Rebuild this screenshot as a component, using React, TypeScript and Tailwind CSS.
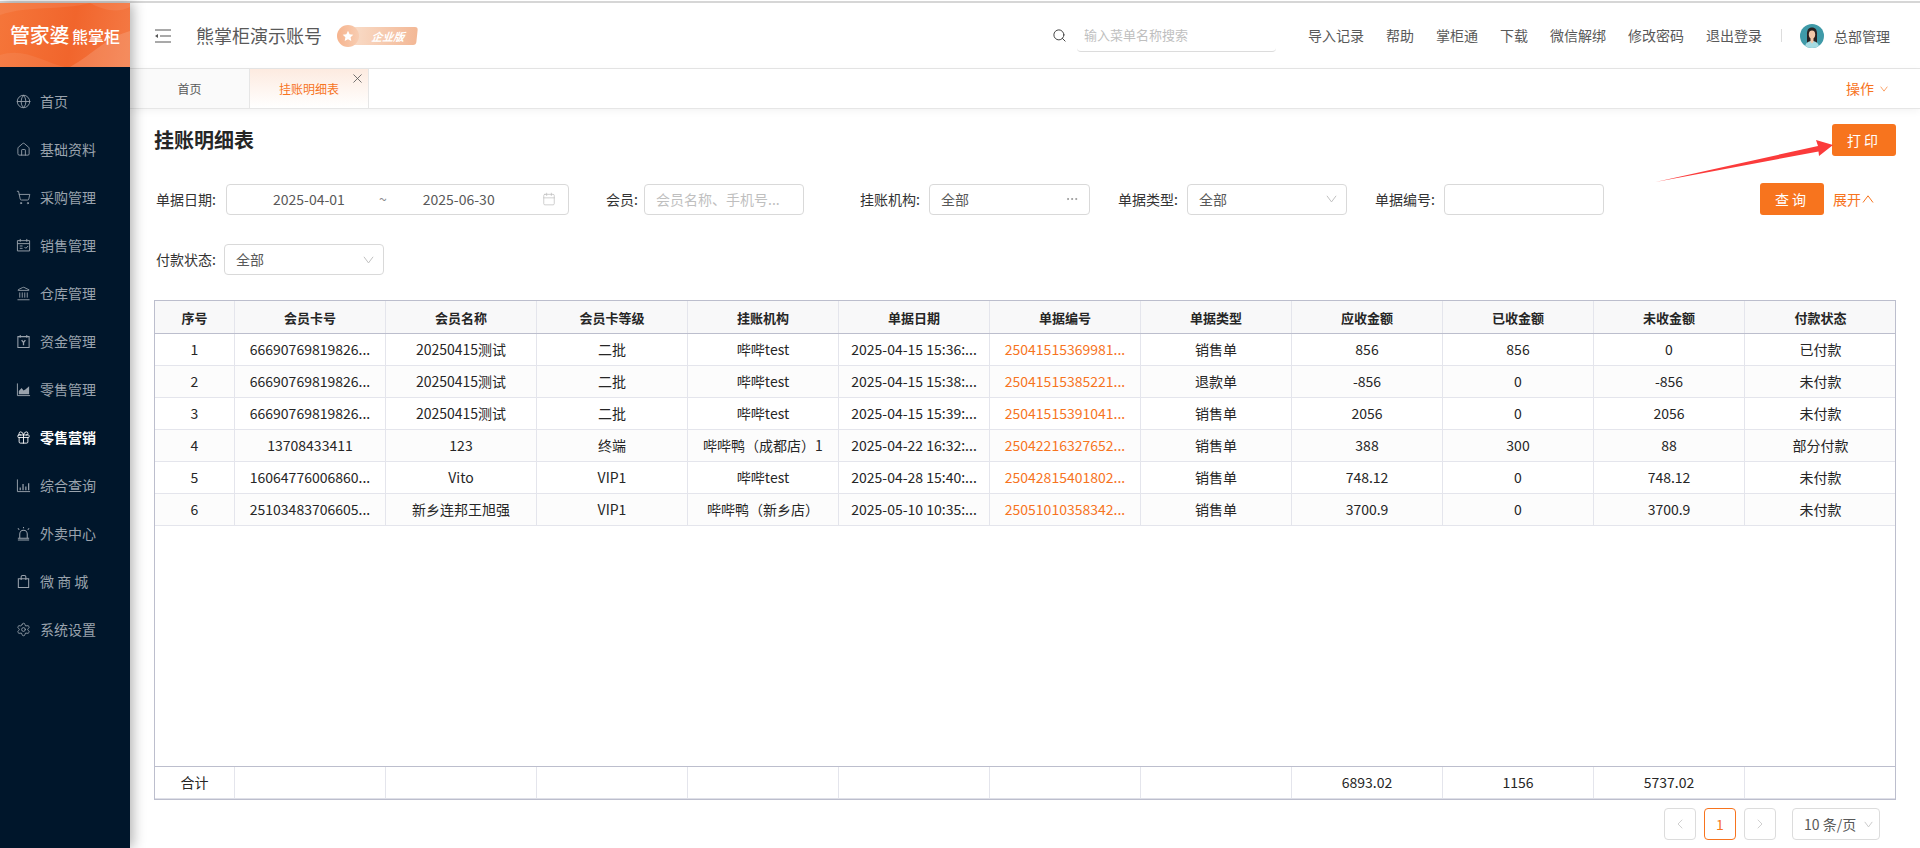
import { Globe, House, ShoppingCart, Landmark, Gift, Settings, Search, X, ChevronLeft, ChevronRight, Calendar, Ellipsis } from 'lucide-react';

const FONT = 'font-["Noto_Sans_CJK_SC","Noto_Sans",sans-serif]';

type IconProps = { className?: string; strokeWidth?: number };

function YenBox({ className }: IconProps) {
  return (
    <svg viewBox="0 0 16 16" fill="none" stroke="currentColor" strokeWidth="1.1" className={className}>
      <path d="M4.500 1v3M11.500 1v3M2 2.800h12v11.700H2z" />
      <path d="M6 6.500l2 2.500 2-2.500M8 9v3" strokeWidth="1.400" />
    </svg>
  );
}

function SalesCal({ className }: IconProps) {
  return (
    <svg viewBox="0 0 16 16" fill="none" stroke="currentColor" strokeWidth="1" className={className}>
      <path d="M4.500 1v3M11.500 1v3M1.500 2.800h13v11h-13z" />
      <path d="M1.500 6h13M4 8.500h3M4 11h3M9 9.500l1.500 1.500 2.500-2.500" />
    </svg>
  );
}

function AreaIcon({ className }: IconProps) {
  return (
    <svg viewBox="0 0 16 16" fill="none" stroke="currentColor" strokeWidth="1" className={className}>
      <path d="M1.500 1.500V14.500H15" />
      <path d="M3 13V9.500L6 6.500 8 9 10 8 14 4.500V13z" fill="currentColor" stroke="none" />
    </svg>
  );
}

function BarsIcon({ className }: IconProps) {
  return (
    <svg viewBox="0 0 16 16" fill="none" stroke="currentColor" strokeWidth="1" className={className}>
      <path d="M1.500 1.500V14.500H15" />
      <path d="M4.500 13V10M7.500 13V6.500M10.500 13V9M13.500 13V5.500" strokeWidth="1.300" />
    </svg>
  );
}

function AlarmIcon({ className }: IconProps) {
  return (
    <svg viewBox="0 0 16 16" fill="none" stroke="currentColor" strokeWidth="1.100" className={className}>
      <path d="M4 13V8.500a4 4 0 0 1 8 0V13M2 15h12" />
      <path d="M2 2.500l1.500 1.500M14 2.500L12.500 4M8 1v1.500M2 13h12" />
    </svg>
  );
}

function BagIcon({ className }: IconProps) {
  return (
    <svg viewBox="0 0 16 16" fill="none" stroke="currentColor" strokeWidth="1.100" className={className}>
      <path d="M2.500 5h11v9.500h-11zM5.500 6.500V3a1.500 1.500 0 0 1 1.500-1.500h2A1.500 1.500 0 0 1 10.500 3v3.500" />
    </svg>
  );
}

function Caret({ up, className }: { up?: boolean; className?: string }) {
  return (
    <svg viewBox="0 0 12 8" fill="none" stroke="currentColor" strokeWidth="1" className={className}>
      <path d={up ? 'M1 7.500L6 .8l5 6.700' : 'M1 .5l5 6.700L11 .5'} />
    </svg>
  );
}

const menu = [
  { icon: Globe, label: '首页' },
  { icon: House, label: '基础资料' },
  { icon: ShoppingCart, label: '采购管理' },
  { icon: SalesCal, label: '销售管理' },
  { icon: Landmark, label: '仓库管理' },
  { icon: YenBox, label: '资金管理' },
  { icon: AreaIcon, label: '零售管理' },
  { icon: Gift, label: '零售营销', active: true },
  { icon: BarsIcon, label: '综合查询' },
  { icon: AlarmIcon, label: '外卖中心' },
  { icon: BagIcon, label: '微 商 城' },
  { icon: Settings, label: '系统设置' },
];

const navLinks = ['导入记录', '帮助', '掌柜通', '下载', '微信解绑', '修改密码', '退出登录'];

const columns = ['序号', '会员卡号', '会员名称', '会员卡等级', '挂账机构', '单据日期', '单据编号', '单据类型', '应收金额', '已收金额', '未收金额', '付款状态'];

const rows = [
  ['1', '66690769819826...', '20250415测试', '二批', '哔哔test', '2025-04-15 15:36:...', '25041515369981...', '销售单', '856', '856', '0', '已付款'],
  ['2', '66690769819826...', '20250415测试', '二批', '哔哔test', '2025-04-15 15:38:...', '25041515385221...', '退款单', '-856', '0', '-856', '未付款'],
  ['3', '66690769819826...', '20250415测试', '二批', '哔哔test', '2025-04-15 15:39:...', '25041515391041...', '销售单', '2056', '0', '2056', '未付款'],
  ['4', '13708433411', '123', '终端', '哔哔鸭（成都店）1', '2025-04-22 16:32:...', '25042216327652...', '销售单', '388', '300', '88', '部分付款'],
  ['5', '16064776006860...', 'Vito', 'VIP1', '哔哔test', '2025-04-28 15:40:...', '25042815401802...', '销售单', '748.12', '0', '748.12', '未付款'],
  ['6', '25103483706605...', '新乡连邦王旭强', 'VIP1', '哔哔鸭（新乡店）', '2025-05-10 10:35:...', '25051010358342...', '销售单', '3700.9', '0', '3700.9', '未付款'],
];

const totals = ['合计', '', '', '', '', '', '', '', '6893.02', '1156', '5737.02', ''];

const gridCols = 'grid grid-cols-[80px_repeat(11,151px)]';

function Logo() {
  return (
    <div className="relative h-[64px] overflow-hidden bg-[linear-gradient(100deg,#f5763a,#f1652c_55%,#f47a45)] flex items-center pl-[10px]">
      <svg viewBox="0 0 130 64" className="absolute inset-0 w-full h-full">
        <path d="M0 12C30 2 60 8 90 0H0z" fill="#ffffff" fillOpacity="0.08" />
        <path d="M70 64C95 50 105 35 130 28V64z" fill="#ffffff" fillOpacity="0.14" />
        <path d="M90 0C105 8 118 10 130 4V0z" fill="#ffffff" fillOpacity="0.08" />
        <path d="M0 52C25 44 45 60 65 64H0z" fill="#ffffff" fillOpacity="0.07" />
      </svg>
      <span className="relative text-white font-medium text-[20px] leading-none tracking-[-0.3px]">管家婆</span>
      <span className="relative text-white font-medium text-[16px] leading-none ml-[3px] mt-[2px]">熊掌柜</span>
    </div>
  );
}

function Sidebar() {
  return (
    <aside className="relative z-10 w-[130px] shrink-0 bg-[#00162b] shadow-[3px_0_12px_rgba(0,0,0,0.3)]">
      <Logo />
      <nav className="pt-[10px]">
        {menu.map((item) => (
          <div key={item.label} className={`h-[48px] flex items-center pl-[16px] text-[14px] ${item.active ? 'text-white font-bold' : 'text-[#9aa3ad]'}`}>
            <item.icon className="w-[15px] h-[15px] mr-[9px]" strokeWidth={1.4} />
            <span>{item.label}</span>
          </div>
        ))}
      </nav>
    </aside>
  );
}

function Avatar() {
  return (
    <svg viewBox="0 0 24 24" className="w-[24px] h-[24px] rounded-full">
      <rect width="24" height="24" fill="#3f9aa8" />
      <path d="M7 20V9.500C7 5 9.500 3.500 12 3.500S17 5 17 9.500V20z" fill="#2a2120" />
      <ellipse cx="12" cy="10.500" rx="3.200" ry="4" fill="#f2c7a8" />
      <path d="M5 24c0-5 3-7 7-7s7 2 7 7z" fill="#a6dbe2" />
      <path d="M10.500 14h3v4l-1.500 1.500L10.500 18z" fill="#f2c7a8" />
    </svg>
  );
}

function Header() {
  return (
    <header className="h-[66px] shrink-0 flex items-center border-b border-[#e6e6e6] bg-white">
      <svg viewBox="0 0 16 14" className="w-[16px] h-[14px] ml-[25px]" fill="none" stroke="#555555" strokeWidth="1.200">
        <path d="M0 1h16M5 7h11M0 13h16" />
        <path d="M0 7l3-2v4z" fill="#555555" stroke="none" />
      </svg>
      <span className="ml-[25px] text-[18px] text-[#595959]">熊掌柜演示账号</span>
      <div className="relative ml-[15px] w-[80px] h-[22px]">
        <div className="absolute left-[14px] top-[2px] w-[66px] h-[18px] rounded-[3px] -skew-x-6 bg-[linear-gradient(90deg,#f9dcc8,#f3b896)] flex items-center justify-center pl-[8px]">
          <span className="text-white text-[11px] font-bold italic leading-none">企业版</span>
        </div>
        <div className="absolute left-0 top-0 w-[22px] h-[22px] rounded-full bg-[linear-gradient(90deg,#f6b48e,#f8cdb2)] flex items-center justify-center">
          <svg viewBox="0 0 12 12" className="w-[12px] h-[12px]">
            <path d="M6 .8l1.600 3.400 3.700.5-2.700 2.600.7 3.700L6 9.200 2.700 11l.7-3.700L.7 4.700l3.700-.5z" fill="#ffffff" />
          </svg>
        </div>
      </div>
      <Search className="ml-auto w-[15px] h-[15px] text-[#444444]" strokeWidth={1.6} />
      <div className="ml-[10px] w-[199px] h-[32px] flex items-center pl-[7px] text-[13px] text-[#bfbfbf] border-b border-[#dcdcdc] rounded-b-[4px]">输入菜单名称搜索</div>
      <div className="ml-[32px] flex items-center gap-[22px] text-[14px] text-[#595959]">
        {navLinks.map((t) => (
          <span key={t}>{t}</span>
        ))}
      </div>
      <div className="ml-[19px] w-px h-[13px] bg-[#dddddd]" />
      <div className="ml-[18px]">
        <Avatar />
      </div>
      <span className="ml-[10px] mr-[30px] mt-[2px] text-[14px] text-[#595959]">总部管理</span>
    </header>
  );
}

function Tabs() {
  return (
    <div className="relative h-[40px] shrink-0 flex border-b border-[#e6e6e6] bg-white shadow-[0_2px_8px_rgba(0,0,0,0.05)]">
      <div className="w-[120px] flex items-center justify-center bg-[#fafafa] border-r border-[#e6e6e6] text-[12px] text-[#595959]">首页</div>
      <div className="relative w-[119px] flex items-center justify-center bg-[linear-gradient(180deg,#fdebe0,#ffffff)] border-r border-[#e6e6e6] text-[12px] text-[#f7741e]">
        挂账明细表
        <X className="absolute right-[3px] top-[2px] w-[15px] h-[15px] text-[#555555]" strokeWidth={1.3} />
      </div>
      <div className="ml-auto mr-[32px] flex items-center text-[14px] text-[#f7741e]">
        操作
        <Caret className="ml-[6px] w-[8px] h-[6px]" />
      </div>
    </div>
  );
}

function Field({ className, children }: { className: string; children?: React.ReactNode }) {
  return <div className={`h-[31px] shrink-0 flex items-center border border-[#d9d9d9] rounded-[4px] text-[14px] text-[#595959] ${className}`}>{children}</div>;
}

function Label({ className, children }: { className: string; children: React.ReactNode }) {
  return <span className={`shrink-0 whitespace-nowrap text-right text-[14px] text-[#333333] ${className}`}>{children}</span>;
}

function SelectBox({ className }: { className: string }) {
  return (
    <Field className={`pl-[11px] pr-[9px] justify-between ${className}`}>
      全部
      <Caret className="w-[11px] h-[8px] text-[#bbbbbb]" />
    </Field>
  );
}

function Filters() {
  return (
    <>
      <div className="mt-[27px] h-[32px] flex items-center pr-[24px]">
        <Label className="w-[72px] pr-[10px]">单据日期:</Label>
        <Field className="w-[343px] pl-[46px] pr-[12px]">
          <span className="w-[72px]">2025-04-01</span>
          <span className="ml-[34px] text-[#8c8c8c]">~</span>
          <span className="ml-[36px] w-[72px]">2025-06-30</span>
          <Calendar className="ml-auto w-[14px] h-[14px] text-[#bbbbbb]" strokeWidth={1.2} />
        </Field>
        <Label className="w-[75px] pr-[6px]">会员:</Label>
        <Field className="w-[160px] pl-[11px] text-[#bfbfbf]">会员名称、手机号...</Field>
        <Label className="w-[125px] pr-[9px]">挂账机构:</Label>
        <Field className="w-[161px] pl-[11px] pr-[10px] justify-between">
          全部
          <Ellipsis className="w-[14px] h-[14px] text-[#8c8c8c]" strokeWidth={1.4} />
        </Field>
        <Label className="w-[97px] pr-[9px]">单据类型:</Label>
        <SelectBox className="w-[160px]" />
        <Label className="w-[97px] pr-[9px]">单据编号:</Label>
        <Field className="w-[160px]" />
        <div className="ml-auto w-[136px] flex items-center">
          <button className="w-[64px] h-[32px] rounded-[3px] bg-[#f7741e] text-white text-[14px] tracking-[3px]">查询</button>
          <span className="ml-[9px] flex items-center text-[14px] text-[#f7741e]">
            展开
            <Caret up className="ml-[1px] w-[12px] h-[8px]" />
          </span>
        </div>
      </div>
      <div className="mt-[29px] h-[31px] flex items-center">
        <Label className="w-[70px] pr-[8px]">付款状态:</Label>
        <SelectBox className="w-[160px]" />
      </div>
    </>
  );
}

function DataTable() {
  return (
    <div className="mt-[25px] w-[1742px] h-[500px] flex flex-col border border-[#bcbecd] text-[14px] text-[#262626]">
      <div className={`${gridCols} h-[33px] shrink-0 border-b border-[#bcbecd] bg-[#f8f8f9] text-[13px] font-bold`}>
        {columns.map((c) => (
          <div key={c} className="flex items-center justify-center pt-[1px] border-r border-[#e4e5ec] last:border-r-0">{c}</div>
        ))}
      </div>
      <div className="flex-1">
        {rows.map((row, i) => (
          <div key={row[0]} className={`${gridCols} h-[32px] border-b border-[#e4e5ec] ${i % 2 === 1 ? 'bg-[#fcfcfc]' : 'bg-white'}`}>
            {row.map((cell, j) => (
              <div key={j} className={`flex items-center justify-center border-r border-[#e4e5ec] last:border-r-0 ${j === 6 ? 'text-[#f7741e]' : ''}`}>{cell}</div>
            ))}
          </div>
        ))}
      </div>
      <div className={`${gridCols} h-[33px] shrink-0 border-y border-t-[#bcbecd] border-b-[#dfe0e8]`}>
        {totals.map((t, j) => (
          <div key={j} className="flex items-center justify-center border-r border-[#e4e5ec] last:border-r-0">{t}</div>
        ))}
      </div>
    </div>
  );
}

function Pagination() {
  return (
    <div className="mt-[8px] w-[1726px] flex justify-end items-center text-[14px]">
      <div className="w-[32px] h-[32px] flex items-center justify-center border border-[#dcdcdc] rounded-[4px] text-[#c4c4c4]">
        <ChevronLeft className="w-[16px] h-[16px]" strokeWidth={1.2} />
      </div>
      <div className="ml-[8px] w-[32px] h-[32px] flex items-center justify-center border border-[#f7741e] rounded-[4px] text-[#f7741e]">1</div>
      <div className="ml-[8px] w-[32px] h-[32px] flex items-center justify-center border border-[#dcdcdc] rounded-[4px] text-[#c4c4c4]">
        <ChevronRight className="w-[16px] h-[16px]" strokeWidth={1.2} />
      </div>
      <div className="ml-[16px] w-[88px] h-[32px] flex items-center justify-between px-[11px] pr-[6px] border border-[#dcdcdc] rounded-[4px] text-[#595959]">
        10 条/页
        <Caret className="w-[9px] h-[7px] text-[#bbbbbb]" />
      </div>
    </div>
  );
}

export default function App() {
  return (
    <div className={`relative w-[1920px] h-[848px] overflow-hidden bg-white flex flex-col ${FONT}`}>
      <div className="h-[3px] shrink-0 border-b-2 border-[#d6d6d6]" />
      <div className="flex-1 flex min-h-0">
        <Sidebar />
        <main className="flex-1 flex flex-col min-w-0">
          <Header />
          <Tabs />
          <div className="pl-[24px]">
            <div className="mt-[15px] pr-[24px] h-[32px] flex items-center justify-between">
              <h1 className="text-[20px] font-bold text-[#262626]">挂账明细表</h1>
              <button className="w-[64px] h-[32px] rounded-[3px] bg-[#f7741e] text-white text-[14px] tracking-[3px]">打印</button>
            </div>
            <Filters />
            <DataTable />
            <Pagination />
          </div>
        </main>
      </div>
      {/* annotation arrow on top of the screenshot */}
      <svg viewBox="0 0 190 50" className="absolute left-[1650px] top-[135px] w-[190px] h-[50px]">
        <polygon points="5.500,47 168,11 166,5 183,10 169,21 168.500,16.500" fill="#fb3b3b" />
      </svg>
    </div>
  );
}
